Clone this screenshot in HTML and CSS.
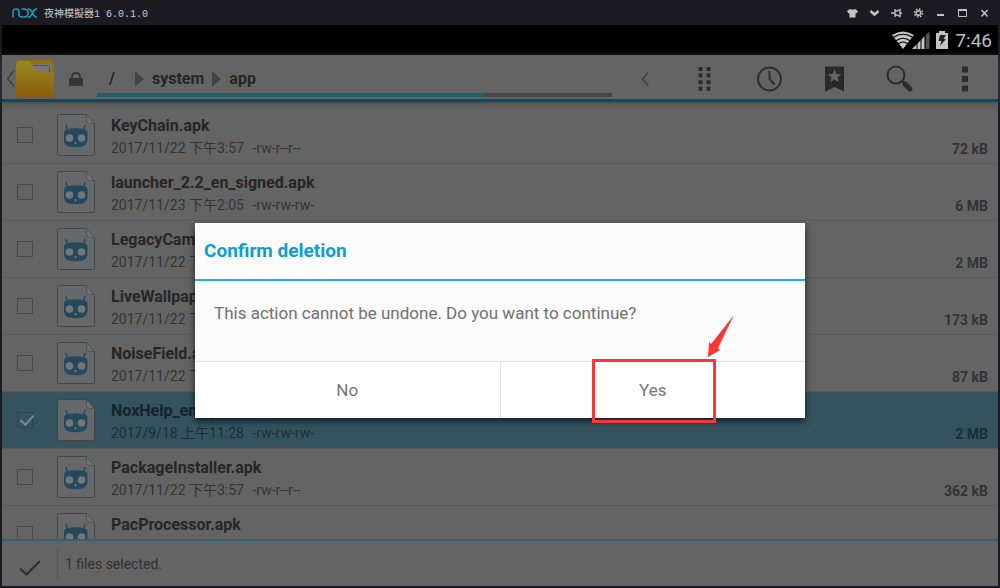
FILE: index.html
```
<!DOCTYPE html>
<html lang="en">
<head>
  <meta charset="UTF-8" />
  <meta name="viewport" content="width=device-width, initial-scale=1.0" />
  <title>Confirm deletion</title>
  <link rel="stylesheet" href="styles.css">
</head>
<body>
  <!-- shared icons -->
  <svg width="0" height="0" class="defs" aria-hidden="true">
    <defs>
      <linearGradient id="folderFill" x1="0" y1="0" x2="0" y2="1">
        <stop offset="0" stop-color="#968a22"/>
        <stop offset="1" stop-color="#8d5a0c"/>
      </linearGradient>
      <symbol id="apk" viewBox="0 0 38 42">
        <path d="M2.500.5H29.500L37.500 10V39.500Q37.500 41.500 35.500 41.500H2.500Q.5 41.500.5 39.500V2.500Q.5.5 2.500.5Z" fill="#666869" stroke="#414546"/>
        <path d="M29.500 1V6.500Q29.500 9.500 32.500 9.500H37" fill="#707070" stroke="#505354"/>
        <path d="M9 11.500 11 17.500M28 11.500 26 17.500" stroke="#24495d" stroke-width="1.500" stroke-linecap="round"/>
        <path d="M9.500 15.500Q18.500 13 27.500 15.500Q30.500 16 30.500 19V26Q30 31 25.500 32.500Q18.500 34 11.500 32.500Q7 31 7 26V19Q7 16 9.500 15.500Z" fill="#24495d"/>
        <circle cx="12.500" cy="24" r="3.800" fill="#747677"/>
        <circle cx="24.500" cy="24" r="3.800" fill="#747677"/>
        <path d="M17 28.500H20L18.500 30.500Z" fill="#8a8c8d"/>
      </symbol>
    </defs>
  </svg>

  <header class="titlebar">
    <svg class="nox" width="26" height="10" viewBox="0 0 26 10" fill="none" stroke="#12a4c4" stroke-width="1.500">
      <path d="M1 9.500V4Q1 1 4 1T7 4V6Q7 9 10 9H12Q16 9 16 5T12 1H9.500M16 1Q19 1 20.500 5T25 9M25 1Q22 1 20.500 5T16 9"/>
    </svg>
    <span class="window-name">夜神模擬器1 6.0.1.0</span>
    <div class="window-buttons">
      <button aria-label="Theme"><svg width="11" height="10" viewBox="0 0 11 10"><path d="M3 1 0 3 1.500 5.500 2.500 5V9.500H8.500V5L9.500 5.500 11 3 8 1Q5.500 2.500 3 1Z" fill="#c4c4c4"/></svg></button>
      <button aria-label="More"><svg width="11" height="10" viewBox="0 0 11 10"><path d="M1.500 3 5.500 6.500 9.500 3" fill="none" stroke="#c4c4c4" stroke-width="2.500"/></svg></button>
      <button aria-label="Pin"><svg width="11" height="10" viewBox="0 0 11 10" fill="none" stroke="#c4c4c4" stroke-width="1.300"><path d="M0 5H4M4 1V9M4 3H6L9 1.500V8.500L6 7H4M9 5H11"/></svg></button>
      <button aria-label="Settings"><svg width="11" height="10" viewBox="0 0 11 10" fill="none" stroke="#c4c4c4"><circle cx="5.500" cy="5" r="2.300" stroke-width="1.400"/><circle cx="5.500" cy="5" r="4" stroke-width="1.500" stroke-dasharray="1.500 1.640"/></svg></button>
      <button aria-label="Minimize"><svg width="11" height="10" viewBox="0 0 11 10"><path d="M2 7H9" stroke="#c4c4c4" stroke-width="2"/></svg></button>
      <button aria-label="Maximize"><svg width="11" height="10" viewBox="0 0 11 10" fill="none" stroke="#c4c4c4"><path d="M1.500 2.500H9.500V8.500H1.500Z"/><path d="M1 2H10" stroke-width="2"/></svg></button>
      <button aria-label="Close"><svg width="11" height="10" viewBox="0 0 11 10"><path d="M2.500 2 8.500 8.500M8.500 2 2.500 8.500" stroke="#c4c4c4" stroke-width="1.500"/></svg></button>
    </div>
  </header>

  <div class="statusbar">
    <svg width="56" height="18" viewBox="0 0 56 18">
      <path d="M0 4Q11-3 22 4L11 18Z" fill="#c4c4c4"/>
      <path d="M1 6.500Q11 0 21 6.500M3.500 10Q11 4.500 18.500 10M6 13Q11 9 16 13" fill="none" stroke="#000" stroke-width="1.200"/>
      <path d="M20 18 33 5V18Z" fill="#c4c4c4"/>
      <path d="M33.500 4.500 37.500.5V18H33.500Z" fill="#555"/>
      <path d="M25 5V18M29 3V18M33 2V18" stroke="#000"/>
      <path d="M44 2H47V0H53V2H56V18H44Z" fill="#c4c4c4"/>
      <path d="M48 4H54L51.500 8H54L48 15 49.500 10H46.500Z" fill="#222"/>
    </svg>
    <span>7:46</span>
  </div>

  <main class="app">
    <nav class="toolbar">
      <button class="folder" aria-label="Up">
        <svg width="48" height="38" viewBox="0 0 48 38">
          <path d="M8 11 1.500 18.500 8 26" fill="none" stroke="#3d3d3d" stroke-width="1.500"/>
          <rect x="10" y="0" width="38" height="38" rx="4" fill="#916e16"/>
          <path d="M24 3.500H43Q45.500 3.500 45.500 6V14H28Z" fill="#777674"/>
          <path d="M27 5.500H41.500Q43.500 5.500 43.500 7.500V12" fill="none" stroke="#55534c"/>
          <path d="M10 5Q10 1 14 1H23L31 11.500Q32 12 34 12H48V34Q48 38 44 38H14Q10 38 10 34Z" fill="url(#folderFill)"/>
        </svg>
      </button>
      <svg class="lock" width="14" height="14" viewBox="0 0 14 14"><path d="M3 7V4.500Q3 1 7 1T11 4.500V7" fill="none" stroke="#363636" stroke-width="1.800"/><rect y="6" width="14" height="8" rx="1" fill="#363636"/></svg>
      <div class="path">
        <a href="#">/</a>
        <i></i>
        <a href="#">system</a>
        <i></i>
        <a href="#">app</a>
      </div>
      <div class="actions">
        <button aria-label="Previous"><svg width="40" height="40" viewBox="0 0 40 40"><path d="M28 13.500 22.500 20 28 26.500" fill="none" stroke="#404040" stroke-width="1.500"/></svg></button>
        <button aria-label="Grid"><svg width="40" height="40" viewBox="0 0 40 40"><path d="M15.500 8V32M23.500 8V32" stroke="#2d2d2d" stroke-width="4" stroke-dasharray="4 2.600"/></svg></button>
        <button aria-label="History"><svg width="40" height="40" viewBox="0 0 40 40" fill="none" stroke="#2d2d2d" stroke-width="2"><circle cx="19.500" cy="20" r="11.500"/><path d="M19.500 12V20L24.500 25.500"/></svg></button>
        <button aria-label="Bookmarks"><svg width="40" height="40" viewBox="0 0 40 40"><path d="M10 7.500H29V32.500L19.500 28 10 32.500Z" fill="#292929"/><path d="M19.500 10 21.400 15 26.500 15.200 22.500 18.300 23.900 23.400 19.500 20.500 15.100 23.400 16.500 18.300 12.500 15.200 17.600 15Z" fill="#646464"/></svg></button>
        <button aria-label="Search"><svg width="40" height="40" viewBox="0 0 40 40"><circle cx="16" cy="16" r="8.500" fill="none" stroke="#2d2d2d" stroke-width="2"/><path d="M22 22 25.500 25.500" stroke="#2d2d2d" stroke-width="2"/><path d="M25 25 30 30" stroke="#2d2d2d" stroke-width="5" stroke-linecap="round"/></svg></button>
        <button aria-label="Menu"><svg width="40" height="40" viewBox="0 0 40 40" fill="#2d2d2d"><path d="M17 7.500H23V13.500H17ZM17 17H23V23H17ZM17 26.500H23V32.500H17Z"/></svg></button>
      </div>
    </nav>

    <ul class="files">
      <li>
        <input type="checkbox" id="f1">
        <svg class="icon"><use href="#apk"/></svg>
        <label for="f1"><b>KeyChain.apk</b><span>2017/11/22 下午3:57 <em>-rw-r--r--</em></span></label>
        <span class="size">72 kB</span>
      </li>
      <li>
        <input type="checkbox" id="f2">
        <svg class="icon"><use href="#apk"/></svg>
        <label for="f2"><b>launcher_2.2_en_signed.apk</b><span>2017/11/23 下午2:05 <em>-rw-rw-rw-</em></span></label>
        <span class="size">6 MB</span>
      </li>
      <li>
        <input type="checkbox" id="f3">
        <svg class="icon"><use href="#apk"/></svg>
        <label for="f3"><b>LegacyCamera.apk</b><span>2017/11/22 下午3:57 <em>-rw-r--r--</em></span></label>
        <span class="size">2 MB</span>
      </li>
      <li>
        <input type="checkbox" id="f4">
        <svg class="icon"><use href="#apk"/></svg>
        <label for="f4"><b>LiveWallpapers.apk</b><span>2017/11/22 下午3:57 <em>-rw-r--r--</em></span></label>
        <span class="size">173 kB</span>
      </li>
      <li>
        <input type="checkbox" id="f5">
        <svg class="icon"><use href="#apk"/></svg>
        <label for="f5"><b>NoiseField.apk</b><span>2017/11/22 下午3:57 <em>-rw-r--r--</em></span></label>
        <span class="size">87 kB</span>
      </li>
      <li class="selected">
        <input type="checkbox" id="f6" checked>
        <svg class="icon"><use href="#apk"/></svg>
        <label for="f6"><b>NoxHelp_en.apk</b><span>2017/9/18 上午11:28 <em>-rw-rw-rw-</em></span></label>
        <span class="size">2 MB</span>
      </li>
      <li>
        <input type="checkbox" id="f7">
        <svg class="icon"><use href="#apk"/></svg>
        <label for="f7"><b>PackageInstaller.apk</b><span>2017/11/22 下午3:57 <em>-rw-r--r--</em></span></label>
        <span class="size">362 kB</span>
      </li>
      <li>
        <input type="checkbox" id="f8">
        <svg class="icon"><use href="#apk"/></svg>
        <label for="f8"><b>PacProcessor.apk</b></label>
      </li>
    </ul>

    <footer class="selection">
      <button aria-label="Done"><svg width="22" height="16" viewBox="0 0 22 16"><path d="M1 8.500 7.500 14.500 21 1" fill="none" stroke="#2f2f2f" stroke-width="2"/></svg></button>
      <span>1 files selected.</span>
    </footer>

    <div class="overlay">
      <div class="dialog" role="dialog" aria-labelledby="dialogTitle">
        <h2 id="dialogTitle">Confirm deletion</h2>
        <p>This action cannot be undone. Do you want to continue?</p>
        <div class="dialog-buttons">
          <button>No</button>
          <button class="yes">Yes
            <span class="marker"></span>
            <svg class="arrow" width="28" height="43" viewBox="0 0 28 43"><path d="M27 0 11 33 13 35 1 42 2 27 4 29Z" fill="#fb3636"/></svg>
          </button>
        </div>
      </div>
    </div>
  </main>
</body>
</html>
```
FILE: styles.css
```
* { box-sizing: border-box; }
body { margin: 0; height: 100vh; display: flex; flex-direction: column; background: #1c1b22; font-family: Roboto, "Noto Sans CJK SC", sans-serif; color: #262626; }
button { border: 0; padding: 0; background: none; font: inherit; color: inherit; }
svg { display: block; }
.defs { position: absolute; }

.titlebar { height: 25px; display: flex; align-items: center; padding: 0 10px 0 12px; color: #c8c8c8; }
.window-name { margin-left: 6px; font: 10px "Liberation Mono", "Noto Sans CJK TC", monospace; }
.window-buttons { margin-left: auto; display: flex; gap: 11px; }

.statusbar { height: 30px; margin: 0 2px; padding-right: 6px; display: flex; align-items: center; justify-content: flex-end; gap: 7px; background: #000; color: #bdbdbd; font-size: 19px; }

.app { flex: 1; min-height: 0; margin: 0 2px 2px; position: relative; display: flex; flex-direction: column; background: #646464; }

.toolbar { height: 47px; flex: none; display: flex; align-items: center; padding-top: 3px; border-bottom: 3px solid #084d63; box-shadow: 0 1px 5px #444; }
.folder { margin-left: 4px; }
.lock { margin-left: 15px; }
.path { flex: 1; max-width: 515px; height: 36px; margin-left: 14px; padding-top: 4px; display: flex; align-items: center; border-bottom: 4px solid; border-image: linear-gradient(to right, #235d70 75%, #454545 75%) 1; }
.path a { color: #262626; font-size: 16px; font-weight: bold; text-decoration: none; }
.path a:first-child { padding: 0 20px 0 12px; }
.path i { border: 8px solid transparent; border-left: 9px solid #444; border-right: 0; margin: 0 8px; }
.path i:first-of-type { margin-left: 0; }
.actions { display: flex; gap: 25px; margin-left: auto; padding-right: 13px; }

.files { flex: 1; min-height: 0; overflow: hidden; list-style: none; margin: 0; padding: 4px 0 0; }
.files li { height: 57px; display: flex; align-items: center; padding: 0 10px 0 15px; border-top: 1px solid #5a5a5a; }
.files input { appearance: none; width: 16px; height: 16px; margin: 0; border: 1px solid #484848; }
.files input:checked { position: relative; border-color: #264653; background: #305464; }
.files input:checked::after { content: ""; position: absolute; left: 5px; top: -1px; width: 6px; height: 11px; border: solid #888; border-width: 0 2px 2px 0; transform: rotate(42deg); }
.files .icon { width: 38px; height: 42px; margin: 0 16px 0 24px; }
.files label { flex: 1; height: 42px; font-size: 14px; line-height: 20px; color: #333; }
.files b { display: block; font-size: 16px; line-height: 24px; color: #262626; }
.files em { font-style: normal; margin-left: 5px; }
.size { align-self: flex-end; padding-bottom: 4px; font-size: 14px; line-height: 20px; font-weight: bold; color: #333; }
.files .selected { background: #34535f; }
.files .selected label, .files .selected .size { color: #1c2e35; }
.files .selected b { color: #14242a; }

.selection { flex: none; height: 47px; display: flex; align-items: center; border-top: 2px solid #306270; font-size: 14px; color: #303030; }
.selection button { width: 56px; height: 34px; padding: 8px 0 0 17px; border-right: 1px solid #555; }
.selection span { padding-left: 7px; }

.overlay { position: absolute; inset: 0; display: flex; align-items: center; justify-content: center; }
.dialog { width: 610px; max-width: 90%; background: #fbfbfb; box-shadow: 0 3px 7px rgba(0, 0, 0, 0.7); }
.dialog h2 { margin: 0; padding: 0 9px; font-size: 19px; line-height: 56px; color: #0c9fd0; border-bottom: 2px solid #22b1e2; }
.dialog p { margin: 0; padding: 20px 19px 36px; font-size: 17px; line-height: 24px; color: #707070; }
.dialog-buttons { display: flex; border-top: 1px solid #e0e0e0; background: #fff; }
.dialog-buttons button { flex: 1; height: 56px; font-size: 17px; color: #757575; }
.dialog-buttons .yes { position: relative; border-left: 1px solid #e0e0e0; }
.marker { position: absolute; left: 91px; top: -3px; width: 124px; height: 64px; border: 3px solid #fb3636; }
.arrow { position: absolute; left: 206px; top: -47px; }
```
